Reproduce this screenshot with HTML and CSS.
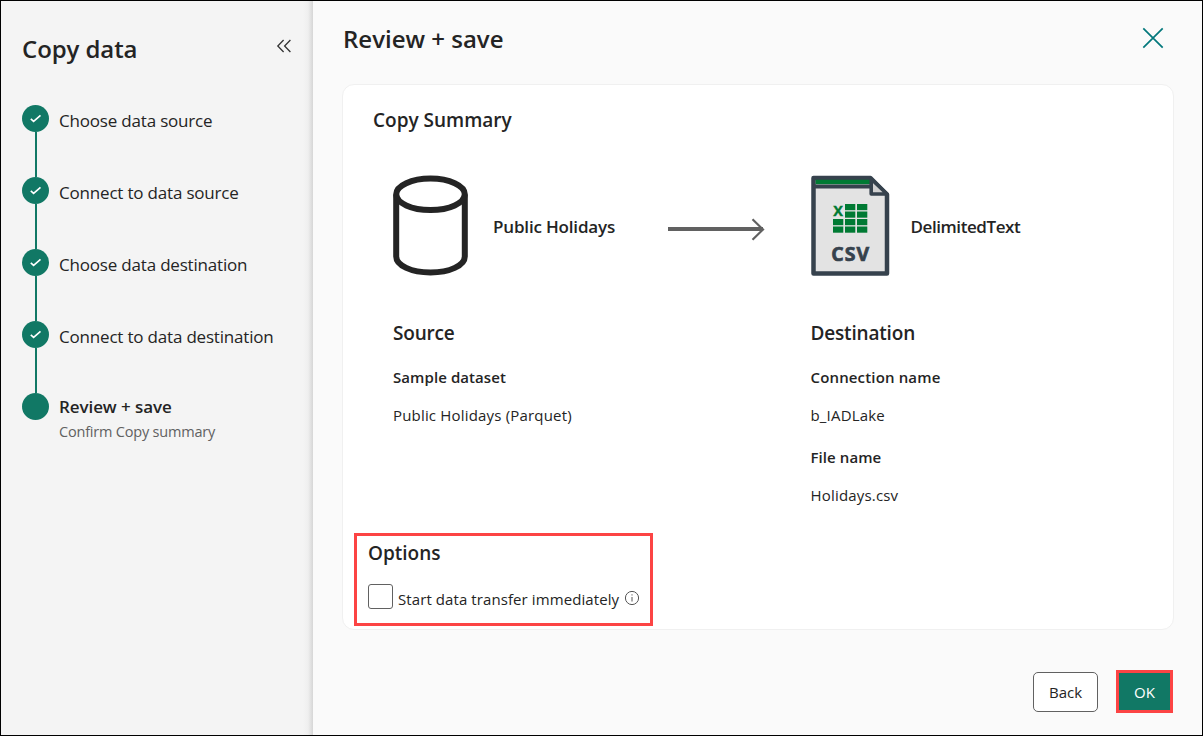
FILE: index.html
```html
<!DOCTYPE html>
<html lang="en">
<head>
<meta charset="utf-8">
<title>Copy data</title>
<link rel="stylesheet" href="styles.css">
</head>
<body>
<div class="window">
  <aside class="sidebar">
    <header class="sidebar-head">
      <h1 class="sidebar-title">Copy data</h1>
      <svg class="collapse" width="16" height="16" viewBox="0 0 16 16"><path d="M7.600 2 1.800 8l5.800 6M14.400 2 8.600 8l5.800 6"/></svg>
    </header>
    <ol class="steps">
      <li class="step"><span class="dot"><svg width="13" height="11" viewBox="0 0 13 11"><path d="M1.800 5.800 4.600 8.400 11.500 2.400"/></svg></span><span class="step-label">Choose data source</span></li>
      <li class="step"><span class="dot"><svg width="13" height="11" viewBox="0 0 13 11"><path d="M1.800 5.800 4.600 8.400 11.500 2.400"/></svg></span><span class="step-label">Connect to data source</span></li>
      <li class="step"><span class="dot"><svg width="13" height="11" viewBox="0 0 13 11"><path d="M1.800 5.800 4.600 8.400 11.500 2.400"/></svg></span><span class="step-label">Choose data destination</span></li>
      <li class="step"><span class="dot"><svg width="13" height="11" viewBox="0 0 13 11"><path d="M1.800 5.800 4.600 8.400 11.500 2.400"/></svg></span><span class="step-label">Connect to data destination</span></li>
      <li class="step step-current"><span class="dot"></span><div class="step-text"><span class="current-label">Review + save</span><span class="current-note">Confirm Copy summary</span></div></li>
    </ol>
  </aside>
  <main class="main">
    <header class="main-head">
      <h2 class="main-title">Review + save</h2>
      <svg class="close" width="22" height="22" viewBox="0 0 22 22"><path d="M1.300 1.300 20.700 20.700M20.700 1.300 1.300 20.700"/></svg>
    </header>
    <section class="card">
      <h3 class="card-title">Copy Summary</h3>
      <div class="flow">
        <svg class="database" width="76" height="101" viewBox="0 0 76 101"><path d="M3.200 19.500v62C3.200 90.500 18.500 97.500 37.500 97.500S71.800 90.500 71.800 81.500v-62"/><ellipse cx="37.500" cy="19.300" rx="34.300" ry="15.700"/></svg>
        <span class="endpoint-name">Public Holidays</span>
        <svg class="arrow" width="98" height="24" viewBox="0 0 98 24"><path class="shaft" d="M0 12H95"/><path class="tip" d="M84.500 2.200 95 12.500 84.500 22.800"/></svg>
        <svg class="csv" width="80" height="102" viewBox="0 0 80 102">
          <path class="page" d="M2.500 3H59.500L76 19.500V98.500H2.500Z"/>
          <path class="band" d="M4.600 7H59"/>
          <path class="rule" d="M2.500 11.600H59"/>
          <path class="fold" d="M60.200 4V19H76Z"/>
          <g class="cells"><rect x="34" y="29" width="10.300" height="6.200"/><rect x="46" y="29" width="10.300" height="6.200"/><rect x="34" y="36.500" width="10.300" height="6.200"/><rect x="46" y="36.500" width="10.300" height="6.200"/><rect x="22" y="44" width="10.300" height="6.200"/><rect x="34" y="44" width="10.300" height="6.200"/><rect x="46" y="44" width="10.300" height="6.200"/><rect x="22" y="51.500" width="10.300" height="6.200"/><rect x="34" y="51.500" width="10.300" height="6.200"/><rect x="46" y="51.500" width="10.300" height="6.200"/></g>
          <text class="x-mark" x="22.300" y="41">X</text>
          <text class="csv-label" x="20.200" y="85.500" textLength="38">CSV</text>
        </svg>
        <span class="endpoint-name delimited">DelimitedText</span>
      </div>
      <div class="details">
        <div class="col">
          <h4 class="col-title">Source</h4>
          <p class="key">Sample dataset</p>
          <p class="value">Public Holidays (Parquet)</p>
        </div>
        <div class="col">
          <h4 class="col-title">Destination</h4>
          <p class="key connection">Connection name</p>
          <p class="value">b_IADLake</p>
          <p class="key">File name</p>
          <p class="value">Holidays.csv</p>
        </div>
      </div>
      <div class="options">
        <h4 class="options-title">Options</h4>
        <label class="option"><span class="box"></span><span class="option-label">Start data transfer immediately</span><svg class="info" width="16" height="16" viewBox="0 0 16 16"><circle cx="8" cy="8" r="6.600"/><path d="M8 7V11.500M8 4.300V5.500"/></svg></label>
      </div>
    </section>
    <footer class="actions">
      <button class="btn btn-back">Back</button>
      <button class="btn btn-ok">OK</button>
    </footer>
  </main>
</div>
</body>
</html>
```
FILE: styles.css
```css
* { box-sizing: border-box; }
body, h1, h2, h3, h4, p, ol { margin: 0; padding: 0; }
body { font-family: "Open Sans", "Noto Sans", sans-serif; color: #242424; }
svg { display: block; flex: none; fill: none; }
h1, h2, h3, h4 { font-weight: 600; white-space: nowrap; }

.window { display: flex; width: 1203px; height: 736px; border: 1px solid #000; background: #fafafa; overflow: hidden; }
.sidebar { flex: none; width: 312px; padding: 32px 21px 0 21px; background: linear-gradient(to right, #f4f4f4 302px, #efefef 307px, #d6d6d6 312px); }
.sidebar-head { display: flex; justify-content: space-between; height: 72px; }
.sidebar-title { font-size: 24px; line-height: 32px; letter-spacing: -0.080px; }
.collapse { margin-top: 5px; stroke: #333; stroke-width: 1.3; }

.steps { list-style: none; }
.step { position: relative; display: flex; height: 72px; }
.step:not(:last-child)::after { content: ""; position: absolute; left: 13px; top: 27px; width: 2px; height: 45px; background: #117865; }
.dot { flex: none; display: flex; align-items: center; justify-content: center; width: 27px; height: 27px; border-radius: 50%; background: #117865; }
.dot svg { stroke: #fff; stroke-width: 1.6; }
.step-label { margin: 3px 0 0 10px; font-size: 17px; line-height: 25px; letter-spacing: -0.190px; white-space: nowrap; }
.step-text { display: flex; flex-direction: column; margin: 1px 0 0 10px; white-space: nowrap; }
.current-label { font-size: 17px; line-height: 25px; font-weight: 600; letter-spacing: -0.080px; }
.current-note { font-size: 14.500px; line-height: 26px; letter-spacing: -0.200px; color: #616161; }

.main { flex: 1; min-width: 0; padding: 22px 29px 0 29px; }
.main-head { display: flex; justify-content: space-between; height: 61px; padding: 0 9px 0 1px; }
.main-title { font-size: 24px; line-height: 32px; }
.close { margin-top: 4px; stroke: #03787c; stroke-width: 1.7; }

.card { width: 832px; height: 546px; padding: 21px 11px 0; border: 1px solid #f0f0f0; border-radius: 12px; background: #fff; }
.card-title { margin-left: 19px; font-size: 19px; line-height: 28px; }
.flow { display: flex; align-items: center; height: 102px; margin: 40px 0 0 39px; }
.endpoint-name { width: 175px; margin: 4px 0 0 24px; font-size: 17px; line-height: 24px; font-weight: 600; letter-spacing: -0.170px; white-space: nowrap; }
.arrow { margin-top: 7px; }
.shaft { stroke: #616161; stroke-width: 4; }
.tip { stroke: #616161; stroke-width: 2.2; }
.database { stroke: #242424; stroke-width: 6; }
.csv { margin: 1px 0 0 45px; }
.delimited { margin-left: 19.500px; letter-spacing: -0.420px; }
.page { fill: #e3e3e3; stroke: #36424d; stroke-width: 4.500; stroke-linejoin: round; }
.band { stroke: #007a33; stroke-width: 4.500; }
.rule { stroke: #36424d; stroke-width: 4; }
.fold { fill: #d0d0d0; stroke: #36424d; stroke-width: 3.600; stroke-linejoin: round; }
.cells, .x-mark { fill: #007a33; }
.x-mark { font-size: 14.500px; font-weight: 700; stroke: #007a33; stroke-width: 0.4; }
.csv-label { fill: #36424d; stroke: #36424d; stroke-width: 0.7; font-size: 19.500px; font-weight: 700; }

.details { display: flex; height: 220px; margin: 43px 0 0 39px; }
.col { flex: none; width: 417.500px; white-space: nowrap; }
.col-title { margin-bottom: 19px; font-size: 19px; line-height: 28px; letter-spacing: -0.180px; }
.key { margin-bottom: 16px; font-size: 15px; line-height: 22px; font-weight: 600; letter-spacing: 0.080px; }
.connection { letter-spacing: 0.150px; }
.value { margin-bottom: 20px; font-size: 15px; line-height: 22px; letter-spacing: 0.180px; }

.options { width: 299px; height: 93px; margin-top: -6px; padding: 3px 11px; border: 3px solid #fc4444; }
.options-title { font-size: 19px; line-height: 28px; }
.option { display: flex; margin-top: 17px; white-space: nowrap; }
.box { flex: none; width: 25px; height: 25px; border: 1px solid #616161; border-radius: 3px; background: #fff; }
.option-label { flex: none; width: 222px; margin: 4px 0 0 5px; font-size: 15px; line-height: 22px; letter-spacing: 0.090px; }
.info { margin: 6px 0 0 4px; stroke: #555; stroke-width: 1; }

.actions { display: flex; justify-content: flex-end; align-items: center; gap: 18px; height: 43px; margin-top: 40px; }
.btn { padding: 0; font: 15px/22px "Open Sans", "Noto Sans", sans-serif; }
.btn-back { width: 65px; height: 40px; margin-top: 1px; border: 1px solid #616161; border-radius: 5px; background: #fff; color: #242424; }
.btn-ok { width: 57px; height: 43px; border: 3px solid #fc4444; background: #117865; color: #fff; }
```
